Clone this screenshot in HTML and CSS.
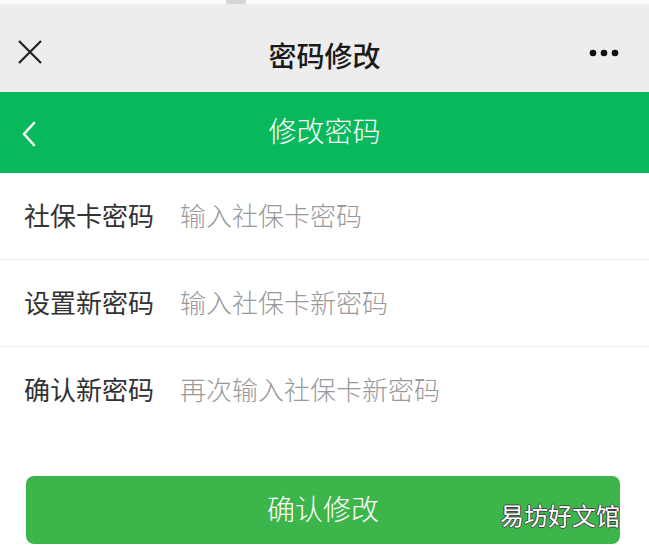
FILE: index.html
```html
<!DOCTYPE html>
<html>
<head>
  <meta charset="utf-8">
  <title>密码修改</title>
  <link rel="stylesheet" href="styles.css">
</head>
<body>
  <div class="status"><span class="notch"></span></div>

  <div class="topbar">
    <svg class="icon-close" width="26" height="26" viewBox="0 0 26 26">
      <path d="M2 2 L24 24 M24 2 L2 24" stroke="#222" stroke-width="2.2" fill="none"/>
    </svg>
    <div class="topbar-title">密码修改</div>
    <svg class="icon-more" width="30" height="8" viewBox="0 0 30 8">
      <circle cx="4" cy="4" r="3.3" fill="#111"/>
      <circle cx="15" cy="4" r="3.3" fill="#111"/>
      <circle cx="26" cy="4" r="3.3" fill="#111"/>
    </svg>
  </div>

  <div class="header">
    <svg class="icon-back" width="16" height="26" viewBox="0 0 16 26">
      <path d="M13 2 L3 13 L13 24" stroke="#fff" stroke-width="2.6" fill="none" stroke-linecap="round" stroke-linejoin="round"/>
    </svg>
    <div class="header-title">修改密码</div>
  </div>

  <div class="form">
    <div class="row">
      <label>社保卡密码</label>
      <input type="password" placeholder="输入社保卡密码">
    </div>
    <div class="row">
      <label>设置新密码</label>
      <input type="password" placeholder="输入社保卡新密码">
    </div>
    <div class="row">
      <label>确认新密码</label>
      <input type="password" placeholder="再次输入社保卡新密码">
    </div>
  </div>

  <div class="actions">
    <button class="btn-submit">确认修改</button>
    <span class="watermark">易坊好文馆</span>
  </div>
</body>
</html>
```

FILE: styles.css
```css
body {
  margin: 0;
  width: 649px;
  height: 547px;
  overflow: hidden;
  background: #fff;
  font-family: "Noto Sans CJK SC", "Noto Sans", sans-serif;
}
.status {
  height: 4px;
  background: #fbfbfb;
  position: relative;
}
.notch {
  position: absolute;
  left: 226px;
  top: 0;
  width: 20px;
  height: 4px;
  background: #d6d6d6;
  border-radius: 0 0 2px 2px;
}
.topbar {
  height: 88px;
  background: #ededed;
  display: flex;
  align-items: center;
  justify-content: space-between;
  padding: 0 30px 0 17px;
  position: relative;
}
.icon-close {
  margin-top: 8px;
}
.topbar-title {
  position: absolute;
  left: 0;
  right: 0;
  top: 7px;
  line-height: 88px;
  text-align: center;
  font-size: 28px;
  font-weight: 500;
  color: #1a1a1a;
  pointer-events: none;
}
.icon-more {
  margin-top: 10px;
}
.header {
  height: 81px;
  background: #07b95c;
  display: flex;
  align-items: center;
  padding-left: 21px;
  position: relative;
}
.icon-back {
  margin-top: 2px;
}
.header-title {
  position: absolute;
  left: 0;
  right: 0;
  top: -2px;
  line-height: 81px;
  text-align: center;
  font-size: 28px;
  font-weight: 300;
  color: #fff;
}
.form {
  background: #fff;
}
.row {
  height: 86px;
  display: flex;
  align-items: center;
  padding-left: 24px;
  border-bottom: 1px solid #ececec;
}
.row:last-child {
  border-bottom: none;
}
.row label {
  width: 156px;
  font-size: 26px;
  color: #333;
  flex-shrink: 0;
  margin-top: -3px;
}
.row input {
  flex: 1;
  border: none;
  outline: none;
  background: transparent;
  font-family: inherit;
  font-size: 26px;
  font-weight: 300;
  color: #333;
  padding: 0;
  margin-top: -3px;
}
.row input::placeholder {
  color: #999;
}
.actions {
  padding: 43px 29px 0 26px;
  position: relative;
}
.btn-submit {
  width: 100%;
  height: 68px;
  border: none;
  border-radius: 8px;
  background: #3cb54b;
  color: #fff;
  font-family: inherit;
  font-size: 28px;
  font-weight: 300;
  padding: 0 0 4px;
}
.watermark {
  position: absolute;
  right: 29px;
  top: 64px;
  font-size: 24px;
  color: #fff;
  text-shadow: 1px 0 0 #444, -1px 0 0 #444, 0 1px 0 #444, 0 -1px 0 #444;
}
```
